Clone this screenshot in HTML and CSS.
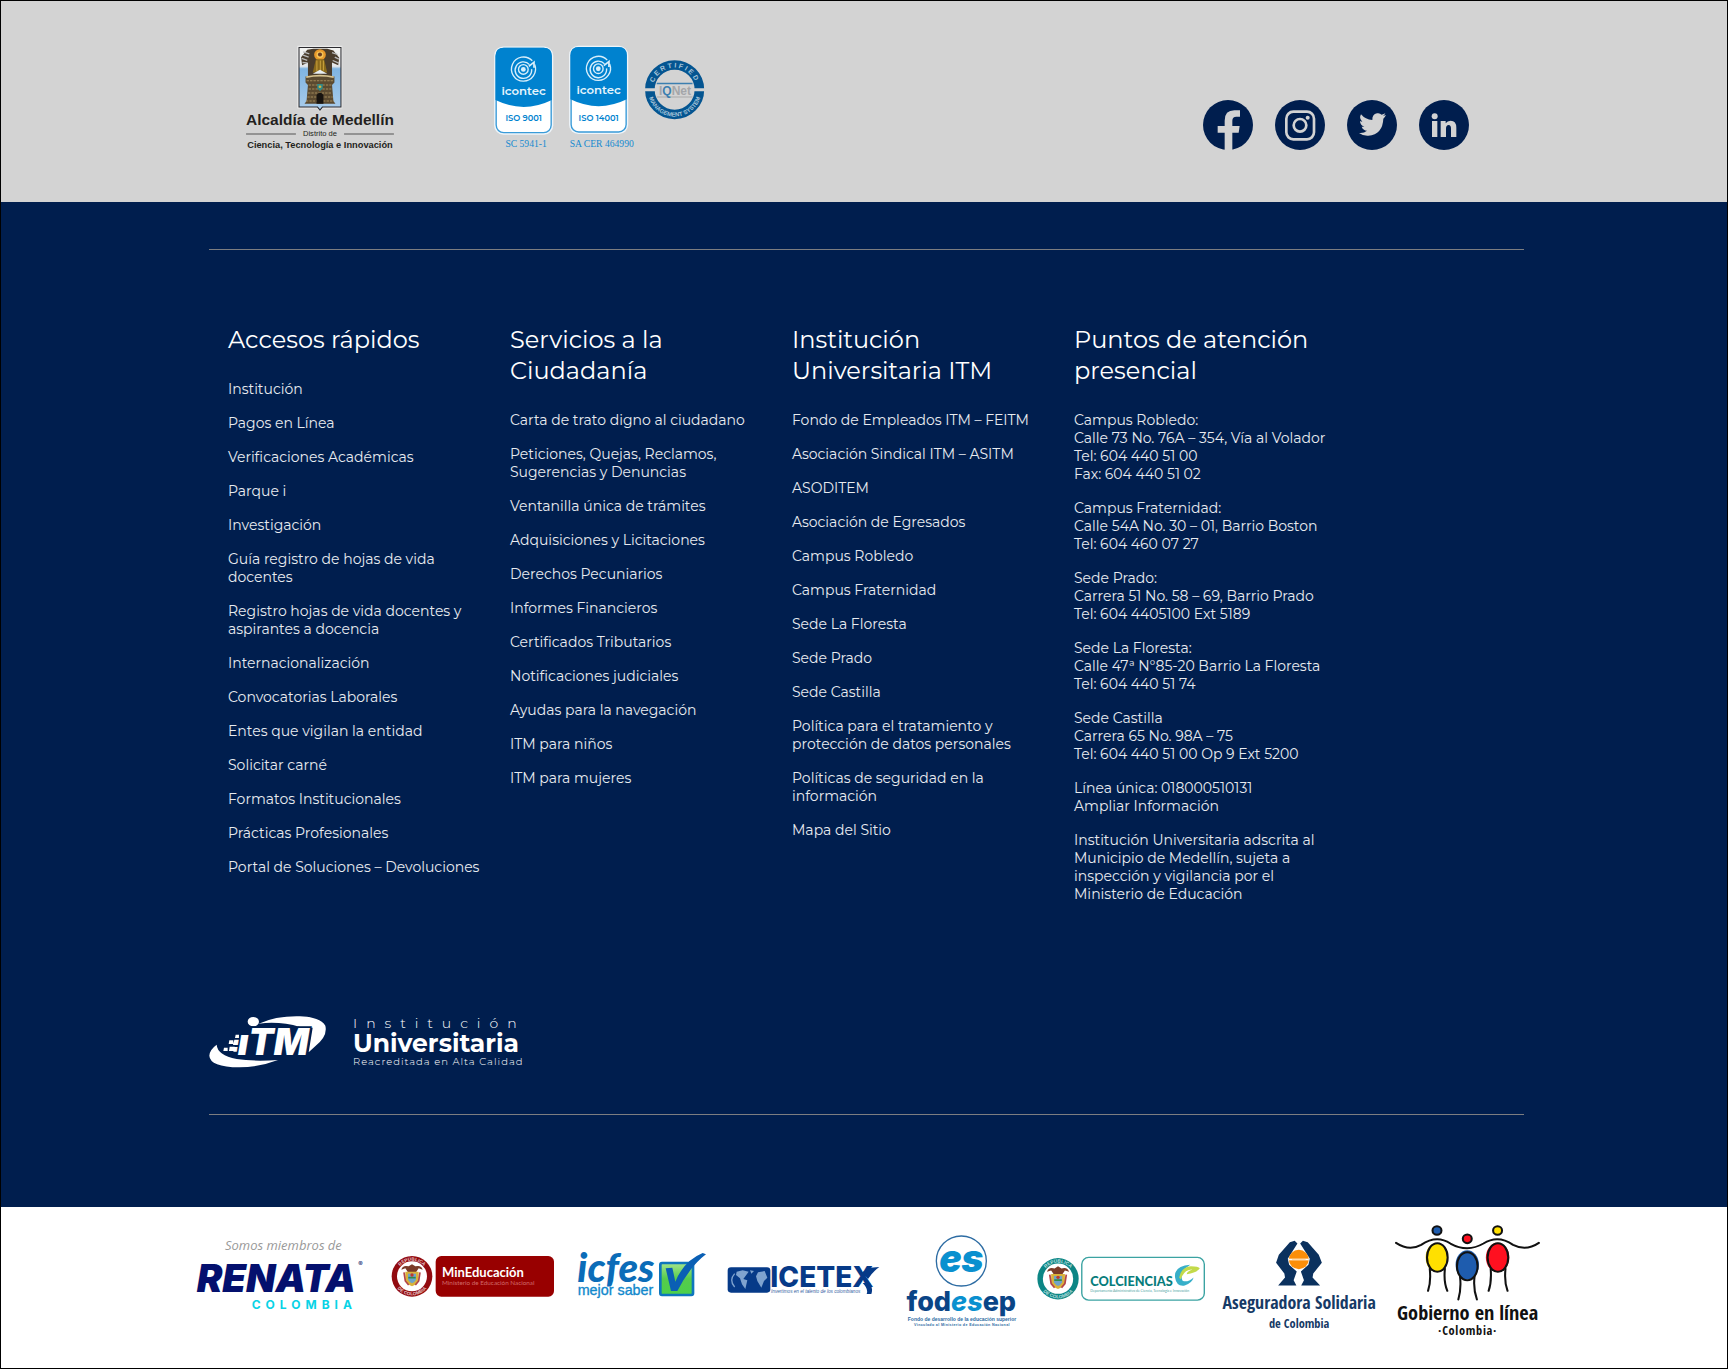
FILE: index.html
```html
<!DOCTYPE html>
<html lang="es">
<head>
<meta charset="utf-8">
<meta name="viewport" content="width=device-width, initial-scale=1">
<title>Institución Universitaria ITM</title>
<link rel="stylesheet" href="styles.css">
</head>
<body>
<footer class="site-footer">
  <section class="topbar">
    <div class="seals">
      <svg class="seal-city" viewBox="131 44 439 317" role="img" aria-label="Alcaldía de Medellín">
        <defs>
          <linearGradient id="sky" x1="0" y1="0" x2="0" y2="1"><stop offset="0" stop-color="#f4f4f2"/><stop offset=".3" stop-color="#e3e6ea"/><stop offset=".34" stop-color="#7fb4e2"/><stop offset="1" stop-color="#a9cdec"/></linearGradient>
        </defs>
        <g transform="scale(1 .968)">
        <path d="M285 50H412V234H357L349 243L341 234H285Z" fill="#e9e9e9" stroke="#e9e9e9" stroke-width="4"/>
        <path d="M288 53H410V232H356L349 241L342 232H288Z" fill="url(#sky)" stroke="#2b2b30" stroke-width="3"/>
        <path d="M294 82L312 60L330 57H370L388 62L405 84L402 106L384 98L384 140H314L314 98L297 106Z" fill="#4a3c2c"/>
        <path d="M296 86L312 92M300 76L316 82M392 82L404 88M386 92L404 100M298 98L312 99M300 66L318 72M384 68L400 74" stroke="#b8b8b8" stroke-width="4"/>
        <circle cx="349" cy="75" r="17" fill="#e8982a"/><circle cx="349" cy="75" r="10" fill="#f6c65a"/><circle cx="349" cy="74" r="6" fill="#6b3d22"/>
        <path d="M337 88H361L370 128H328Z" fill="#8a6a1c"/><path d="M340 92V124M350 92V126M359 92V122" stroke="#c9a13c" stroke-width="3"/>
        <path d="M328 132L349 120L370 132Z" fill="#e9eef2"/>
        <path d="M307 140Q349 130 391 140V158L384 166L388 214L394 222H304L310 214L314 166L307 158Z" fill="#5b4a30"/>
        <path d="M309 142Q349 133 389 142" stroke="#d6c290" stroke-width="5" fill="none"/>
        <path d="M310 153H388M316 166H382M316 178H382M314 190H384M312 202H386M308 214H390" stroke="#a48c5c" stroke-width="3" stroke-dasharray="7 3"/>
        <path d="M339 222V196Q349 182 359 196V222Z" fill="#17130f"/>
        <path d="M341 163H357V176L349 184L341 176Z" fill="#2e8a8b"/><circle cx="349" cy="171" r="4" fill="#d8b13c"/>
        <path d="M134 313H279M419 313H564" stroke="#555" stroke-width="3"/>
        </g>
        <g fill="#231f20" font-family="Liberation Sans, Arial, sans-serif" text-anchor="middle">
          <text x="349" y="278" font-size="45" font-weight="700">Alcaldía de Medellín</text>
          <text x="349" y="310" font-size="22">Distrito de</text>
          <text x="349" y="343" font-size="27" font-weight="700">Ciencia, Tecnología e Innovación</text>
        </g>
      </svg>
      <svg class="seal-quality" viewBox="851 44 619 317" role="img" aria-label="Certificaciones ISO 9001, ISO 14001 e IQNet">
        <defs>
          <g id="icontec">
            <rect x="-4" y="-4" width="172" height="257" rx="27" fill="#eef5fa"/>
            <rect x="2" y="2" width="160" height="245" rx="22" fill="#fff" stroke="#3a9bd8" stroke-width="4"/>
            <path d="M0 152V24Q0 0 24 0H140Q164 0 164 24V152Q82 192 0 152Z" fill="#0082cf"/>
            <g fill="none" stroke="#d9effb" stroke-width="4">
              <path d="M107 38A35 35 0 1 0 114 49M99 49A24 24 0 1 0 105 62"/>
              <circle cx="81" cy="63" r="14"/><path d="M97 54L112 42V58" stroke-width="5"/>
            </g>
            <circle cx="81" cy="63" r="7" fill="#d9effb"/>
            <text x="82" y="136" text-anchor="middle" font-family="Montserrat, Lato, sans-serif" font-weight="600" font-size="34" fill="#e6f5fd">icontec</text>
          </g>
          <path id="arcTop" d="M1315 174A64 64 0 0 1 1443 174"/>
          <path id="arcBottom" d="M1301 174A78 78 0 0 0 1457 174"/>
        </defs>
        <use href="#icontec" x="858" y="52"/>
        <use href="#icontec" x="1076" y="50"/>
        <g font-family="Montserrat, Lato, sans-serif" font-weight="600" font-size="24" fill="#0082cf" text-anchor="middle">
          <text x="940" y="265">ISO 9001</text><text x="1158" y="265">ISO 14001</text>
        </g>
        <g font-family="Liberation Serif, Times New Roman, serif" font-size="28" fill="#1489d0" text-anchor="middle">
          <text x="947" y="341">SC 5941-1</text><text x="1167" y="341">SA CER 464990</text>
        </g>
        <circle cx="1379" cy="174" r="72" fill="none" stroke="#045591" stroke-width="28"/>
        <path d="M1291 174H1467" stroke="#d3d3d3" stroke-width="9"/>
        <path d="M1327 156H1431" stroke="#3c7fb0" stroke-width="5"/><path d="M1327 195H1431" stroke="#aaa" stroke-width="3"/>
        <text x="1380" y="188" text-anchor="middle" font-family="Liberation Sans, Arial, sans-serif" font-weight="700" font-size="35" fill="#a4a6a9">I<tspan fill="#3c7fb0">Q</tspan>Net</text>
        <g font-family="Liberation Sans, Arial, sans-serif" font-weight="700" fill="#a9c6da" text-anchor="middle">
          <text font-size="20" letter-spacing="6"><textPath href="#arcTop" startOffset="50%">CERTIFIED</textPath></text>
          <text font-size="17"><textPath href="#arcBottom" startOffset="50%">MANAGEMENT SYSTEM</textPath></text>
        </g>
      </svg>
    </div>
    <nav class="social" aria-label="Redes sociales">
      <a href="#" aria-label="Facebook"><svg viewBox="0 0 150 150"><circle cx="75" cy="75" r="75"/><path class="cut" d="M65 150V98H44V78H65V62Q65 31 94 31H111V50H100Q88 50 88 62V78H110L107 98H88V150Z"/></svg></a>
      <a href="#" aria-label="Instagram"><svg viewBox="0 0 150 150"><circle cx="75" cy="75" r="75"/><g class="line"><rect x="34" y="35" width="83" height="83" rx="21"/><circle cx="75" cy="76" r="19"/></g><circle class="cut" cx="98" cy="53" r="6"/></svg></a>
      <a href="#" aria-label="Twitter"><svg viewBox="0 0 150 150"><circle cx="75" cy="75" r="75"/><path class="cut" d="M117 45Q112 47 108 48Q113 45 115 40Q110 43 104 44Q98 38 90 40Q75 43 76 60Q55 59 42 43Q35 55 46 65Q42 65 39 63Q39 75 52 80Q48 81 44 80Q48 91 60 92Q50 101 36 99Q48 108 64 107Q107 103 109 56Q114 51 117 45Z"/></svg></a>
      <a href="#" aria-label="LinkedIn"><svg viewBox="0 0 150 150"><circle cx="75" cy="75" r="75"/><g class="cut"><circle cx="47" cy="49" r="9"/><path d="M39 63H55V111H39ZM65 63H80V70Q85 62 95 62Q112 62 112 83V111H96V86Q96 75 89 75Q81 75 81 86V111H65Z"/></g></svg></a>
    </nav>
  </section>

  <section class="main">
    <hr class="rule">
    <div class="columns">
      <nav class="column" aria-labelledby="h-accesos">
        <h2 id="h-accesos">Accesos rápidos</h2>
        <ul>
          <li><a href="#">Institución</a></li>
          <li><a href="#">Pagos en Línea</a></li>
          <li><a href="#">Verificaciones Académicas</a></li>
          <li><a href="#">Parque i</a></li>
          <li><a href="#">Investigación</a></li>
          <li><a href="#">Guía registro de hojas de vida<br>docentes</a></li>
          <li><a href="#">Registro hojas de vida docentes y<br>aspirantes a docencia</a></li>
          <li><a href="#">Internacionalización</a></li>
          <li><a href="#">Convocatorias Laborales</a></li>
          <li><a href="#">Entes que vigilan la entidad</a></li>
          <li><a href="#">Solicitar carné</a></li>
          <li><a href="#">Formatos Institucionales</a></li>
          <li><a href="#">Prácticas Profesionales</a></li>
          <li><a href="#">Portal de Soluciones – Devoluciones</a></li>
        </ul>
      </nav>
      <nav class="column" aria-labelledby="h-servicios">
        <h2 id="h-servicios">Servicios a la<br>Ciudadanía</h2>
        <ul>
          <li><a href="#">Carta de trato digno al ciudadano</a></li>
          <li><a href="#">Peticiones, Quejas, Reclamos,<br>Sugerencias y Denuncias</a></li>
          <li><a href="#">Ventanilla única de trámites</a></li>
          <li><a href="#">Adquisiciones y Licitaciones</a></li>
          <li><a href="#">Derechos Pecuniarios</a></li>
          <li><a href="#">Informes Financieros</a></li>
          <li><a href="#">Certificados Tributarios</a></li>
          <li><a href="#">Notificaciones judiciales</a></li>
          <li><a href="#">Ayudas para la navegación</a></li>
          <li><a href="#">ITM para niños</a></li>
          <li><a href="#">ITM para mujeres</a></li>
        </ul>
      </nav>
      <nav class="column" aria-labelledby="h-itm">
        <h2 id="h-itm">Institución<br>Universitaria ITM</h2>
        <ul>
          <li><a href="#">Fondo de Empleados ITM – FEITM</a></li>
          <li><a href="#">Asociación Sindical ITM – ASITM</a></li>
          <li><a href="#">ASODITEM</a></li>
          <li><a href="#">Asociación de Egresados</a></li>
          <li><a href="#">Campus Robledo</a></li>
          <li><a href="#">Campus Fraternidad</a></li>
          <li><a href="#">Sede La Floresta</a></li>
          <li><a href="#">Sede Prado</a></li>
          <li><a href="#">Sede Castilla</a></li>
          <li><a href="#">Política para el tratamiento y<br>protección de datos personales</a></li>
          <li><a href="#">Políticas de seguridad en la<br>información</a></li>
          <li><a href="#">Mapa del Sitio</a></li>
        </ul>
      </nav>
      <section class="column" aria-labelledby="h-puntos">
        <h2 id="h-puntos">Puntos de atención<br>presencial</h2>
        <div class="offices">
          <p>Campus Robledo:<br>Calle 73 No. 76A – 354, Vía al Volador<br>Tel: 604 440 51 00<br>Fax: 604 440 51 02</p>
          <p>Campus Fraternidad:<br>Calle 54A No. 30 – 01, Barrio Boston<br>Tel: 604 460 07 27</p>
          <p>Sede Prado:<br>Carrera 51 No. 58 – 69, Barrio Prado<br>Tel: 604 4405100 Ext 5189</p>
          <p>Sede La Floresta:<br>Calle 47ª N°85-20 Barrio La Floresta<br>Tel: 604 440 51 74</p>
          <p>Sede Castilla<br>Carrera 65 No. 98A – 75<br>Tel: 604 440 51 00 Op 9 Ext 5200</p>
          <p>Línea única: 018000510131<br><a href="#">Ampliar Información</a></p>
          <p>Institución Universitaria adscrita al<br>Municipio de Medellín, sujeta a<br>inspección y vigilancia por el<br>Ministerio de Educación</p>
        </div>
      </section>
    </div>
    <div class="brand">
      <svg class="brand-mark" viewBox="27 45 354 165" role="img" aria-label="ITM" fill="#fff">
        <path d="M176 74Q230 50 300 52Q360 54 376 80Q384 112 344 143L326 160L338 86L300 84Q240 66 176 74Z"/>
        <path d="M50 137Q52 168 110 180Q160 188 234 183Q180 204 118 205Q30 204 28 170Q29 152 50 137Z"/>
        <ellipse cx="160" cy="68" rx="17" ry="14"/>
        <path d="M107 107H117V117H105ZM88 124H100V135H86ZM103 122H124L118 138H99ZM72 146H83V156H70ZM89 143H104V156H87ZM103 144H120L116 158H100Z"/>
        <text class="brand-letters" x="113" y="168" font-size="110">ıTM</text>
      </svg>
      <p class="brand-name"><span class="brand-top">Institución</span><strong>Universitaria</strong><small>Reacreditada en Alta Calidad</small></p>
    </div>
    <hr class="rule">
  </section>

  <section class="partners" aria-label="Entidades aliadas">
    <svg class="w-renata" viewBox="48 45 528 348" role="img" aria-label="Renata Colombia">
      <text x="135" y="122" font-family="Open Sans, sans-serif" font-style="italic" font-size="39" fill="#999">Somos miembros de</text>
      <text x="50" y="249" font-family="Inter, sans-serif" font-weight="900" font-style="italic" font-size="115" fill="#04106e">RENATA</text>
      <text x="535" y="170" font-family="Inter, sans-serif" font-size="20" fill="#04106e">®</text>
      <text x="215" y="301" font-family="Inter, sans-serif" font-weight="700" font-size="36" letter-spacing="15" fill="#08d3e6">COLOMBIA</text>
    </svg>
    <svg class="w-mineducacion" viewBox="624 45 510 348" role="img" aria-label="Ministerio de Educación Nacional">
      <defs>
        <g id="arms">
          <path d="M-32-20Q-28-35-10-30L0-36L10-30Q28-35 32-20L20-24L12-12H-12L-20-24Z" fill="#7b3b28"/>
          <path d="M-20-14H20V12Q14 26 0 30Q-14 26-20 12Z" fill="#d9b23a"/>
          <path d="M-24-12L-20 14L-10 26M24-12L20 14L10 26" stroke="#b2454a" stroke-width="5" fill="none"/>
          <path d="M-12-8H12V10Q6 20 0 21Q-6 20-12 10Z" fill="#6fa3c9"/><path d="M-11 4H11" stroke="#2f8a4c" stroke-width="5"/><circle cy="-4" r="5" fill="#c0392b"/>
        </g>
        <path id="sealTop" d="M-47 0A47 47 0 0 1 47 0"/><path id="sealBottom" d="M-57 0A57 57 0 0 0 57 0"/>
      </defs>
      <g transform="translate(696 202)">
        <circle r="61" fill="#920b10"/><circle r="45" fill="#fff"/><use href="#arms"/>
        <g font-family="Liberation Sans, Arial, sans-serif" font-weight="700" font-size="14" fill="#e7c4c5" text-anchor="middle"><text><textPath href="#sealTop" startOffset="50%">REPÚBLICA</textPath></text><text><textPath href="#sealBottom" startOffset="50%">DE COLOMBIA</textPath></text></g>
      </g>
      <rect x="767" y="141" width="355" height="122" rx="17" fill="#980000"/>
      <text x="786" y="203" font-family="Lato, sans-serif" font-weight="700" font-size="39" fill="#fff">MinEducación</text>
      <text x="786" y="229" font-family="Lato, sans-serif" font-size="19" fill="#d06a6a">Ministerio de Educación Nacional</text>
    </svg>
    <svg class="w-icfes" viewBox="42 45 402 348" role="img" aria-label="Icfes mejor saber">
      <defs><linearGradient id="box" x1="0" y1="0" x2="0" y2="1"><stop offset="0" stop-color="#a5e58c"/><stop offset=".5" stop-color="#55cc4c"/><stop offset="1" stop-color="#4cd04a"/></linearGradient></defs>
      <text x="52" y="220" font-family="Lato, sans-serif" font-weight="900" font-style="italic" font-size="120" fill="#0b6cb8">icfes</text>
      <text x="53" y="259" font-family="Liberation Sans, Arial, sans-serif" font-size="43" fill="#1188cc" stroke="#1188cc">mejor saber</text>
      <rect x="301" y="162" width="98" height="96" rx="5" fill="url(#box)" stroke="#0e76bd" stroke-width="8"/>
      <path d="M317 178L337 176L346 218Q372 155 428 132L438 136Q390 172 352 246H333Z" fill="#0a5fb4"/>
    </svg>
    <svg class="w-icetex" viewBox="492 45 492 348" role="img" aria-label="Icetex">
      <rect x="503" y="175" width="128" height="76" rx="10" fill="#063a88"/>
      <g fill="#7fa3cf"><path d="M530 188L548 184L566 188L556 202L550 210L562 214L556 240L546 226L540 208L528 198ZM570 184L582 186L574 194ZM594 190L614 186L622 206L612 216L604 236L592 216L588 202Z"/><path d="M524 194Q506 214 524 234" fill="none" stroke="#7fa3cf" stroke-width="4"/></g>
      <text x="631" y="234" font-family="Inter, sans-serif" font-weight="800" font-size="84" fill="#063a88">ICETEX</text>
      <path d="M906 190L930 176L958 174Q940 186 924 210ZM908 222L930 222Q940 238 934 255H920Q926 240 908 222Z" fill="#063a88"/>
      <text x="633" y="251" font-family="Liberation Sans, Arial, sans-serif" font-style="italic" font-size="14" fill="#33609f">Invertimos en el talento de los colombianos</text>
    </svg>
    <svg class="w-fodesep" viewBox="1032 45 348 348" role="img" aria-label="Fodesep">
      <circle cx="1204" cy="156" r="75" fill="#fff" stroke="#2d6ca3" stroke-width="4"/>
      <text x="1204" y="190" text-anchor="middle" font-family="Inter, sans-serif" font-weight="900" font-style="italic" font-size="112" fill="#0a90cf">es</text>
      <text x="1204" y="306" text-anchor="middle" font-family="Inter, sans-serif" font-weight="800" font-size="81" fill="#0a4586">fod<tspan fill="#0a90cf" font-style="italic">es</tspan>ep</text>
      <g font-family="Liberation Sans, Arial, sans-serif" font-weight="700" fill="#2d6ca3" text-anchor="middle"><text x="1206" y="336" font-size="15">Fondo de desarrollo de la educación superior</text><text x="1206" y="350" font-size="11" letter-spacing="1">Vinculado al Ministerio de Educación Nacional</text></g>
    </svg>
    <svg class="w-colciencias" viewBox="46 44 491 337" role="img" aria-label="Colciencias">
      <g transform="translate(110 203)">
        <circle r="60" fill="#0c8685"/><circle r="44" fill="#fff"/><use href="#arms"/>
        <g font-family="Liberation Sans, Arial, sans-serif" font-weight="700" font-size="14" fill="#b9dedd" text-anchor="middle"><text><textPath href="#sealTop" startOffset="50%">REPÚBLICA</textPath></text><text><textPath href="#sealBottom" startOffset="50%">DE COLOMBIA</textPath></text></g>
      </g>
      <rect x="179" y="141" width="356" height="124" rx="20" fill="#fff" stroke="#3ba3a2" stroke-width="4"/>
      <text x="204" y="225" font-family="Lato, sans-serif" font-weight="900" font-size="37" fill="#087d7c">COLCIENCIAS</text>
      <text x="204" y="243" font-family="Lato, sans-serif" font-size="10" fill="#4fa5a4">Departamento Administrativo de Ciencia, Tecnología e Innovación</text>
      <g transform="scale(1 .968)">
        <path d="M494 168Q446 172 450 206Q454 234 478 230Q500 222 504 206Q486 222 472 216Q460 190 494 168Z" fill="#37afc9"/>
        <path d="M462 206Q468 174 496 172Q518 172 522 178Q514 192 484 196Q484 188 500 182Q478 180 466 212Z" fill="#c3da4a"/>
      </g>
    </svg>
    <svg class="w-aseguradora" viewBox="584 44 459 337" role="img" aria-label="Aseguradora Solidaria de Colombia">
      <g transform="scale(1 .968)">
        <path d="M798 96L806 104L778 150L782 168L804 188L795 214L803 230H750L770 206L768 194L744 162L752 138L784 100Z" fill="#0b315e"/>
        <path d="M822 96L814 104L842 150L838 168L816 188L825 214L817 230H872L850 206L852 194L877 162L868 138L836 100Z" fill="#0b315e"/>
        <circle cx="810" cy="152" r="29" fill="#fb8e09"/><path d="M781 152H839" stroke="#fff" stroke-width="5"/><path d="M790 152H830" stroke="#ffc982" stroke-width="2"/>
      </g>
      <g class="condensed" fill="#163a66" text-anchor="middle"><text x="811" y="290" font-size="52">Aseguradora Solidaria</text><text x="811" y="345" font-size="36">de Colombia</text></g>
    </svg>
    <svg class="w-gobierno" viewBox="1089 44 430 337" role="img" aria-label="Gobierno en línea Colombia">
      <g transform="scale(1 .968)">
        <ellipse cx="1209" cy="146" rx="31" ry="43" fill="#ffe000"/><ellipse cx="1299" cy="168" rx="34" ry="44" fill="#1e5cae"/><ellipse cx="1387" cy="146" rx="34" ry="44" fill="#ff1020"/>
        <g stroke="#111" stroke-width="6" fill="none" stroke-linecap="round">
          <ellipse cx="1212" cy="146" rx="30" ry="43"/><ellipse cx="1299" cy="172" rx="30" ry="42"/><ellipse cx="1388" cy="146" rx="30" ry="43"/>
          <path d="M1092 102Q1130 128 1165 108Q1210 76 1250 104Q1299 132 1346 104Q1388 76 1432 108Q1470 128 1507 102"/>
          <path d="M1190 180Q1194 220 1185 246M1234 180Q1230 220 1241 246M1278 204Q1282 240 1273 272M1320 204Q1316 240 1327 272M1367 180Q1370 220 1361 246M1410 180Q1406 220 1416 246"/>
          <circle cx="1211" cy="65" r="13" fill="#1e5cae"/><circle cx="1299" cy="90" r="13" fill="#ff1020"/><circle cx="1387" cy="65" r="13" fill="#ffe000"/>
        </g>
      </g>
      <g class="condensed" fill="#111" text-anchor="middle"><text x="1300" y="322" font-size="59">Gobierno en línea</text><text x="1300" y="366" font-size="36" letter-spacing="2">·Colombia·</text></g>
    </svg>
  </section>
</footer>
</body>
</html>
```
FILE: styles.css
```css
* { box-sizing: border-box; }
body { margin: 0; font-family: Montserrat, Inter, sans-serif; }
svg { display: block; flex: none; }
a { color: inherit; text-decoration: none; }
a:hover { text-decoration: underline; }

.site-footer { border: 1px solid #000; background: #fff; }

/* Grey strip: seals and social links */
.topbar {
  display: flex;
  justify-content: space-between;
  align-items: flex-start;
  flex-wrap: wrap;
  padding: 44px 258px 48px 244px;
  background: #d3d3d3;
}
.seals { display: flex; gap: 97px; }
.seal-city { width: 151px; height: 109px; }
.seal-quality { width: 213px; height: 109px; }
.social { display: flex; gap: 22px; padding-top: 55px; }
.social svg { width: 50px; height: 50px; fill: #001e4e; }
.social .cut { fill: #d3d3d3; }
.social .line { fill: none; stroke: #d3d3d3; stroke-width: 8px; }

/* Navy area: link columns and brand */
.main {
  padding: 47px 203px 92px 208px;
  background: #001e4e;
  color: #fff;
}
.rule { height: 1px; margin: 0; border: 0; background: #7c7d80; }
.columns {
  display: grid;
  grid-template-columns: repeat(4, 266px);
  column-gap: 16px;
  padding: 74px 0 111px 19px;
}
.column h2 {
  margin: 0 0 25px;
  font-size: 24px;
  line-height: 31px;
  font-weight: 400;
}
.column ul { margin: 0; padding: 0; list-style: none; }
.column ul, .offices {
  display: flex;
  flex-direction: column;
  gap: 16px;
  font-size: 14px;
  line-height: 18px;
  color: #e8ebf0;
}
.column p { margin: 0; }

.brand { display: flex; gap: 26px; padding-bottom: 45px; }
.brand-mark { width: 118px; height: 55px; }
.brand-letters {
  font-family: Inter, sans-serif;
  font-weight: 900;
  font-style: italic;
  stroke: #001e4e;
  stroke-width: 10px;
  paint-order: stroke;
}
.brand-name { display: flex; flex-direction: column; margin: 0; padding-top: 2px; }
.brand-top { font-size: 14px; line-height: 15px; font-weight: 300; letter-spacing: 9px; }
.brand-name strong { font-size: 25px; line-height: 24px; font-weight: 700; }
.brand-name small { font-size: 10px; line-height: 14px; letter-spacing: 1px; font-weight: 300; }

/* White strip: partner logos */
.partners {
  display: flex;
  flex-wrap: wrap;
  gap: 16px;
  padding: 17px 184px 28px 195px;
}
.partners svg { height: 116px; }
.w-renata { width: 176px; }
.w-mineducacion { width: 170px; }
.w-icfes { width: 134px; }
.w-icetex { width: 164px; }
.w-fodesep { width: 116px; }
.w-colciencias { width: 169px; }
.w-aseguradora { width: 158px; }
.w-gobierno { width: 148px; }
.condensed { font-family: "Open Sans Condensed", "Roboto Condensed", "DejaVu Sans Condensed", "Liberation Sans Narrow", sans-serif; font-weight: 700; }
```
